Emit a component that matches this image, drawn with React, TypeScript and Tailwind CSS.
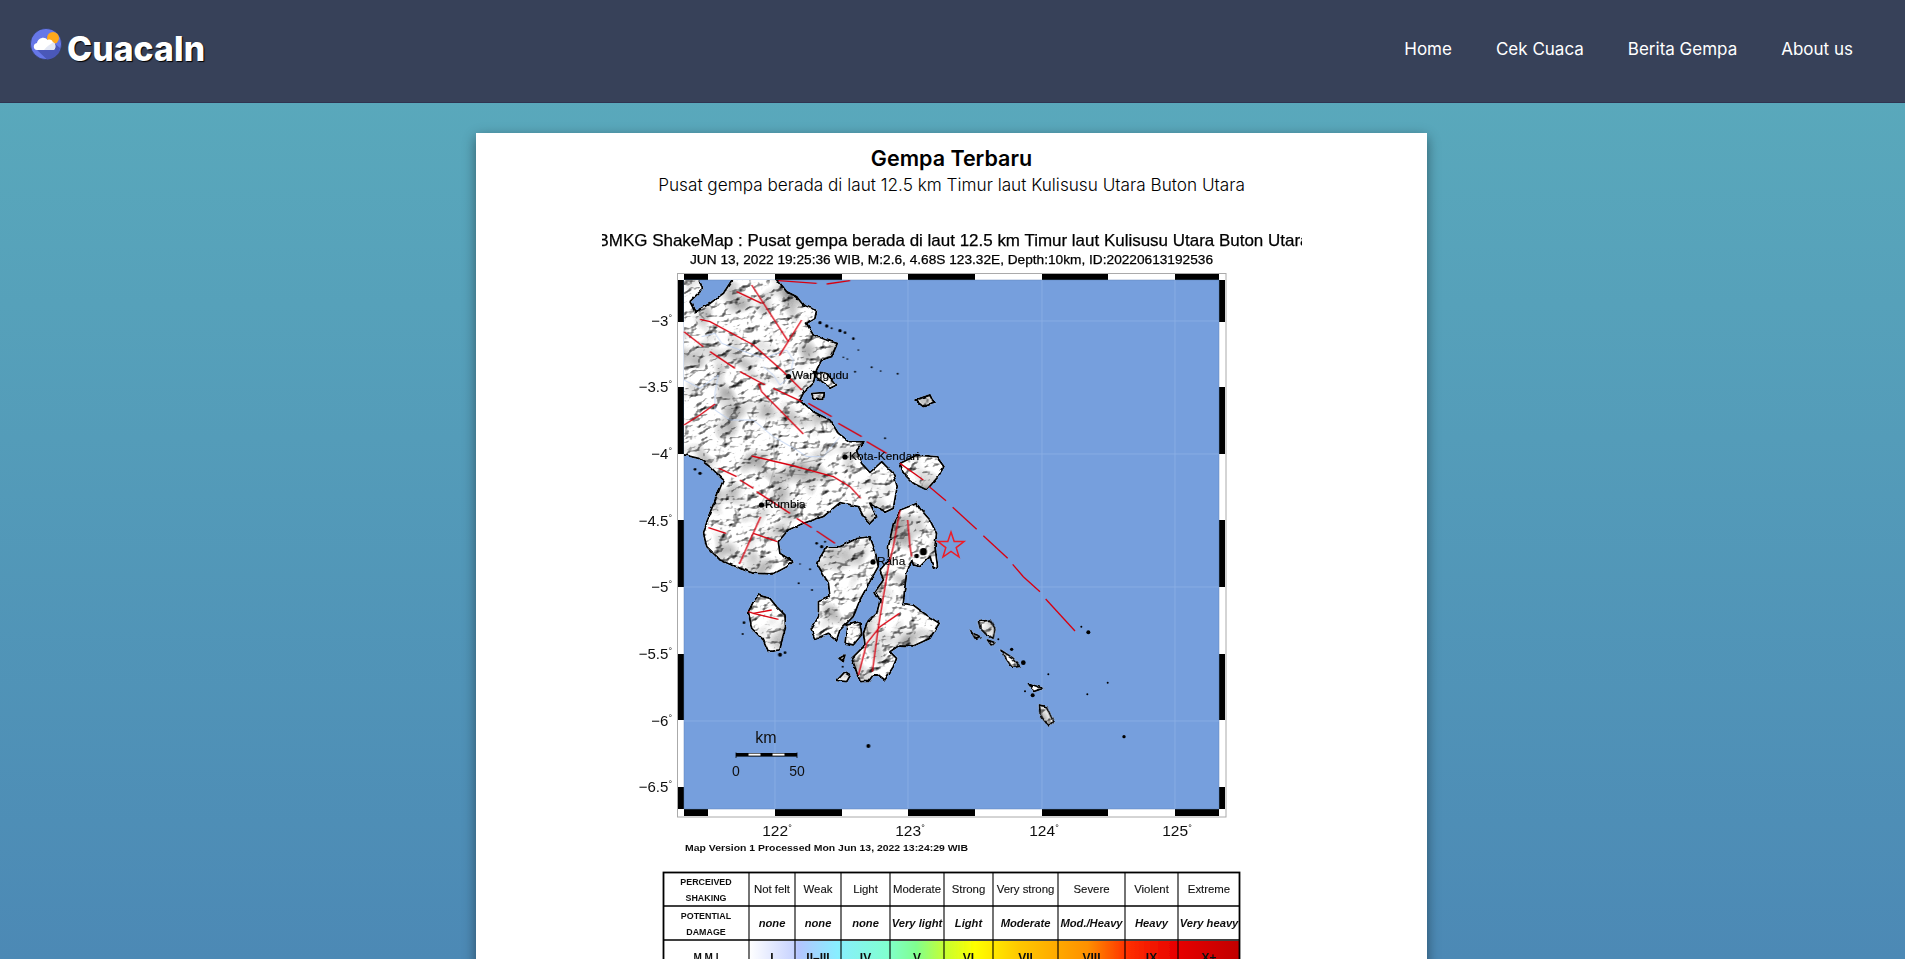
const LABEL = "'Liberation Sans', Arial, sans-serif";

const ticksX = [
  [684, 24, 1], [708, 67, 0], [775, 67, 1], [842, 66, 0], [908, 67, 1], [975, 67, 0], [1042, 66, 1], [1108, 67, 0], [1175, 44, 1],
];
const ticksY = [
  [280, 42, 1], [322, 65, 0], [387, 67, 1], [454, 66, 0], [520, 67, 1], [587, 67, 0], [654, 66, 1], [720, 67, 0], [787, 22, 1],
];
const lats = [["−3", 321], ["−3.5", 387], ["−4", 454], ["−4.5", 521], ["−5", 587], ["−5.5", 654], ["−6", 721], ["−6.5", 787]] as const;
const lons = [["122", 775], ["123", 908], ["124", 1042], ["125", 1175]] as const;

const landA = [
  "120,50 175,50 188,88 170,105 150,125 165,155 210,130 250,100 282,50 405,50 440,95 470,110 490,135 530,150 525,175 500,190 520,225 560,240 592,250 575,290 545,300 530,330 520,370 490,400 480,420 520,455 570,480 595,520 630,545 672,545 650,572 665,610 690,637 725,605 760,640 772,680 760,745 735,757 690,730 710,770 690,790 670,770 655,740 600,728 550,770 490,790 445,810 415,845 420,880 460,905 445,918 400,942 340,940 290,922 240,900 200,860 190,820 205,770 225,720 250,660 215,625 175,595 120,582",
  "780,610 830,585 890,590 912,620 895,650 860,690 820,670 790,640",
  "825,420 870,405 882,430 850,440",
  "515,400 550,398 548,418 520,418",
  "520,335 560,340 590,375 570,385 540,360",
];
const landB = [
  "535,0 560,-40 600,-40 650,-65 690,-70 705,-30 715,20 690,65 660,120 640,170 600,210 590,240 565,220 525,238 513,210 535,170 535,125 570,110 565,70 530,10",
  "780,-150 830,-170 840,-155 870,-120 890,-80 885,-40 893,20 880,25 870,-10 840,20 820,15 815,0 800,40 795,80 790,130 820,135 860,165 898,190 870,235 820,258 780,255 750,275 770,295 760,320 735,360 715,345 700,345 685,365 660,365 635,295 675,255 670,220 680,190 710,160 720,120 705,95 730,60 720,30 745,0 745,-40 760,-110",
  "355,105 390,115 410,140 435,165 437,200 425,245 420,270 385,275 370,240 335,205 325,155 340,125",
  "590,362 615,335 632,345 620,365",
  "597,295 615,285 610,305",
  "620,195 660,185 665,225 640,255 615,250",
];
const landC = [
  "295,605 330,600 345,625 340,655 320,645 300,625",
  "272,632 300,650 285,655",
  "322,660 345,668 335,678",
  "362,690 400,715 420,740 395,742 370,705",
  "445,790 490,805 460,815",
  "478,855 500,860 520,905 505,918 480,885",
];

const faults4 = [
  "M335,75 L445,245 M418,287 L485,180", "M290,95 L365,130",
  "M180,178 L210,185 L340,255 L430,335 L485,390",
  "M132,215 L190,260", "M210,275 L285,325", "M300,335 L375,375", "M400,385 L485,425",
  "M505,430 L575,470", "M595,490 L665,530", "M680,545 L740,580",
  "M355,370 L365,395 L490,522", "M132,495 L180,465 L225,432",
  "M335,588 L450,615 L580,650 L630,680 L662,715",
  "M237,625 L290,650", "M300,660 L340,685", "M350,695 L450,760", "M470,775 L515,803", "M530,813 L585,850",
  "M362,770 L298,912", "M340,820 L412,845", "M205,803 L258,820",
  "M780,750 L760,860 L745,920", "M803,780 L810,860 L815,890", "M415,62 L530,70", "M560,72 L630,62",
];
const faults5 = [
  "M745,20 L715,200 L697,335", "M325,155 L340,160 L395,150", "M340,160 L415,178", "M778,160 L720,200 L680,250 L655,345",
];
const faults7 = [
  "M60,130 L130,180", "M148,200 L198,242", "M218,262 L290,328", "M310,347 L383,415", "M398,433 L430,470 L480,515", "M497,537 L585,633",
];
const rivers = [
  "M185,230 L225,220 L245,250 L300,270 L370,295 L440,270 L460,300 L450,350 L420,375 L400,345 L370,320",
  "M132,360 L180,385 L235,345 L225,400 L225,450 L270,480 L340,480 L400,530 L470,570 L500,590 L550,590 L600,530",
];
const borders = [
  "M400,520 L405,620 L385,690 L350,760", "M480,610 L530,600 L590,560", "M405,640 L500,645",
];
const dots7 = [[604,620,3],[625,637,6],[355,658,3],[395,688,5],[505,763,3],[435,814,3],[683,788,3],[622,823,3],[732,950,5],[458,826,6],[430,728,7]];
const dots4 = [[655,270,2.5],[610,292,2.5],[622,297,2.5],[695,322,3],[722,333,2.5],[773,341,3],[735,535,3],[540,188,5],[560,198,5],[575,205,3],[600,212,5],[615,218,4],[640,236,4],[645,335,3],[165,628,4],[180,640,5],[530,850,4],[545,860,5],[555,845,3],[480,912,2.5],[510,928,3],[850,875,11],[830,888,7]];
const dots5 = [[476,70,3],[516,90,3],[312,188,4],[308,222,3],[420,284,6],[435,278,4],[608,320,3],[685,558,6]];

const cols = [663, 749, 795, 841, 890, 944, 993, 1058, 1125, 1178, 1240];
const shaking = ["Not felt", "Weak", "Light", "Moderate", "Strong", "Very strong", "Severe", "Violent", "Extreme"];
const damage = ["none", "none", "none", "Very light", "Light", "Moderate", "Mod./Heavy", "Heavy", "Very heavy"];
const mmi = ["I", "II–III", "IV", "V", "VI", "VII", "VIII", "IX", "X+"];

function Logo() {
  return (
    <svg viewBox="0 0 32 32" className="w-8 h-8 shrink-0">
      <circle cx="16" cy="16" r="15.6" fill="#6677e8" stroke="#2c3550" strokeWidth="0.6" />
      <path d="M5 20 L24 21 L30 22 A15.6 15.6 0 0 1 17 31.5 Z" fill="#4a58b8" />
      <path d="M25 21 L16 8 L30 20 L29 24 Z" fill="#4a58b8" />
      <circle cx="23" cy="10" r="6" fill="#ffa81c" />
      <path d="M7 22 C3 22 2.5 15.5 7 15 C7.5 10 15 7.5 17.5 12 C20 11 22.5 12 23 14.5 C26 14.5 26.5 22 23 22 Z" fill="#ffffff" />
      <path d="M14 22 L23 22 C26 22 26 14.5 23 14.5 C21 16 17 18 14 22 Z" fill="#e3e7f4" />
    </svg>
  );
}

function MapPicture() {
  return (
    <svg viewBox="602 225 700 734" className="block w-[700px] h-[734px] ml-[126px]" fontFamily={LABEL}>
      <defs>
        <filter id="land" filterUnits="userSpaceOnUse" x="684" y="280" width="535" height="529" colorInterpolationFilters="sRGB">
          <feTurbulence type="fractalNoise" baseFrequency="0.14" numOctaves="2" seed="4" result="wob" />
          <feDisplacementMap in="SourceGraphic" in2="wob" scale="3" xChannelSelector="R" yChannelSelector="G" result="disp" />
          <feTurbulence type="fractalNoise" baseFrequency="0.08 0.13" numOctaves="3" seed="8" result="n" />
          <feDiffuseLighting in="n" surfaceScale="5" diffuseConstant="1.3" lightingColor="#ffffff" result="dl">
            <feDistantLight azimuth="215" elevation="48" />
          </feDiffuseLighting>
          <feComponentTransfer in="dl" result="ct">
            <feFuncR type="table" tableValues="0.15 0.35 0.5 0.62 0.75 0.95 1 1" />
            <feFuncG type="table" tableValues="0.15 0.35 0.5 0.62 0.75 0.95 1 1" />
            <feFuncB type="table" tableValues="0.15 0.35 0.5 0.62 0.75 0.95 1 1" />
          </feComponentTransfer>
          <feTurbulence type="fractalNoise" baseFrequency="0.035" numOctaves="2" seed="21" result="big" />
          <feColorMatrix in="big" type="matrix" values="2.5 0 0 0 -0.35 2.5 0 0 0 -0.35 2.5 0 0 0 -0.35 0 0 0 0 1" result="bigGray" />
          <feComponentTransfer in="bigGray" result="patch">
            <feFuncR type="linear" slope="0.5" intercept="0.55" />
            <feFuncG type="linear" slope="0.5" intercept="0.55" />
            <feFuncB type="linear" slope="0.5" intercept="0.55" />
          </feComponentTransfer>
          <feBlend in="ct" in2="patch" mode="multiply" result="shade" />
          <feBlend in="disp" in2="shade" mode="multiply" result="b" />
          <feComposite in="b" in2="disp" operator="in" />
        </filter>
        <filter id="soft" filterUnits="userSpaceOnUse" x="602" y="225" width="700" height="734">
          <feGaussianBlur stdDeviation="0.4" />
        </filter>
        <clipPath id="pic"><rect x="602" y="225" width="700" height="734" /></clipPath>
        <linearGradient id="mmi" x1="749" x2="1240" y1="0" y2="0" gradientUnits="userSpaceOnUse">
          <stop offset="0" stopColor="#ffffff" />
          <stop offset="0.09" stopColor="#c9d4ff" />
          <stop offset="0.1" stopColor="#b4c4ff" />
          <stop offset="0.18" stopColor="#88eeff" />
          <stop offset="0.28" stopColor="#80ffd0" />
          <stop offset="0.34" stopColor="#80ff90" />
          <stop offset="0.4" stopColor="#c8ff30" />
          <stop offset="0.46" stopColor="#ffff00" />
          <stop offset="0.55" stopColor="#ffc800" />
          <stop offset="0.69" stopColor="#ff9000" />
          <stop offset="0.77" stopColor="#ff3000" />
          <stop offset="0.87" stopColor="#e80000" />
          <stop offset="1" stopColor="#c00000" />
        </linearGradient>
      </defs>
      <g clipPath="url(#pic)">
        <g filter="url(#soft)">
          <text x="597.5" y="245.5" fontSize="16.2" textLength="712" lengthAdjust="spacingAndGlyphs" fill="#000" stroke="#000" strokeWidth="0.25">BMKG ShakeMap : Pusat gempa berada di laut 12.5 km Timur laut Kulisusu Utara Buton Utara</text>
          <text x="690" y="264" fontSize="12.4" textLength="523" lengthAdjust="spacingAndGlyphs" fill="#000" stroke="#000" strokeWidth="0.25">JUN 13, 2022 19:25:36 WIB, M:2.6, 4.68S 123.32E, Depth:10km, ID:20220613192536</text>

          <rect x="677.5" y="273.5" width="548.5" height="543.5" fill="#fff" stroke="#aaa" />
          {ticksX.map(([x, w, k]) => (
            <g key={x}>
              <rect x={x} y={274} width={w} height={6} fill={k ? "#000" : "#fff"} />
              <rect x={x} y={809} width={w} height={7} fill={k ? "#000" : "#fff"} />
            </g>
          ))}
          {ticksY.map(([y, h, k]) => (
            <g key={y}>
              <rect x={678} y={y} width={6} height={h} fill={k ? "#000" : "#fff"} />
              <rect x={1219} y={y} width={6} height={h} fill={k ? "#000" : "#fff"} />
            </g>
          ))}
          <rect x="684" y="280" width="535" height="529" fill="#769fdd" stroke="#5f84bd" strokeWidth="0.5" />
          <g stroke="#8eb0e6" strokeWidth="0.8">
            {lons.map(([, x]) => <line key={x} x1={x} x2={x} y1={280} y2={809} />)}
            {[321, 454, 587, 721].map((y) => <line key={y} x1={684} x2={1219} y1={y} y2={y} />)}
          </g>

          <g filter="url(#land)" fill="#fff" stroke="#000" strokeWidth="5.6" strokeLinejoin="round">
            <g transform="translate(640 260) scale(0.33333)">{landA.map((p) => <polygon key={p} points={p} />)}</g>
            <g transform="translate(640 560) scale(0.33333)">{landB.map((p) => <polygon key={p} points={p} />)}</g>
            <g transform="translate(880 420) scale(0.33333)">{landC.map((p) => <polygon key={p} points={p} />)}</g>
          </g>

          <g transform="translate(640 260) scale(0.33333)" fill="#000">
            {dots4.map(([x, y, r]) => <circle key={`${x}-${y}`} cx={x} cy={y} r={r} />)}
            {rivers.map((d) => <path key={d} d={d} fill="none" stroke="#b7cdf0" strokeWidth="2.4" />)}
            {borders.map((d) => <path key={d} d={d} fill="none" stroke="#8d8d8d" strokeWidth="2" />)}
            {faults4.map((d) => <path key={d} d={d} fill="none" stroke="#d80010" strokeWidth="4" />)}
          </g>
          <g transform="translate(640 560) scale(0.33333)" fill="#000">
            {dots5.map(([x, y, r]) => <circle key={`${x}-${y}`} cx={x} cy={y} r={r} />)}
            {faults5.map((d) => <path key={d} d={d} fill="none" stroke="#d80010" strokeWidth="4" />)}
          </g>
          <g transform="translate(880 420) scale(0.33333)" fill="#000">
            {dots7.map(([x, y, r]) => <circle key={`${x}-${y}`} cx={x} cy={y} r={r} />)}
            {faults7.map((d) => <path key={d} d={d} fill="none" stroke="#d80010" strokeWidth="4" />)}
          </g>

          <polygon points="951,532 954.2,541.6 964,541.6 956.2,547.6 959,557 951,551.4 943,557 945.8,547.6 938,541.6 947.8,541.6" fill="none" stroke="#ee1c25" strokeWidth="1.5" />

          <g fontSize="11.8" fill="#000" stroke="#000" strokeWidth="0.15">
            <circle cx="788.5" cy="376.5" r="2.6" fill="#000" /><text x="792" y="379">Wanggudu</text>
            <circle cx="845" cy="457" r="2.6" fill="#000" /><text x="849" y="460" textLength="70">Kota-Kendari</text>
            <circle cx="761.5" cy="505" r="2.6" fill="#000" /><text x="765" y="507.5">Rumbia</text>
            <circle cx="873" cy="562" r="2.6" fill="#000" /><text x="877" y="564.5">Raha</text>
          </g>

          <g fontSize="15" fill="#111">
            {lats.map(([t, y]) => (
              <text key={t} x="672" y={y + 5} textAnchor="end">{t}<tspan dy="-5" fontSize="9">°</tspan></text>
            ))}
            {lons.map(([t, x]) => (
              <text key={t} x={x + 2} y="835.5" textAnchor="middle" fontSize="15.5">{t}<tspan dy="-5" fontSize="9">°</tspan></text>
            ))}
          </g>

          <text x="766" y="743" fontSize="16" textAnchor="middle" fill="#111">km</text>
          <rect x="736" y="753" width="61" height="3.6" fill="#000" />
          <rect x="748.5" y="753.6" width="12" height="2" fill="#fff" />
          <rect x="772.5" y="753.6" width="12" height="2" fill="#fff" />
          <path d="M736,752.5 V758 M797,752.5 V758" stroke="#000" strokeWidth="0.8" />
          <text x="736" y="776" fontSize="14" textAnchor="middle" fill="#111">0</text>
          <text x="797" y="776" fontSize="14" textAnchor="middle" fill="#111">50</text>

          <text x="685" y="851" fontSize="8.6" fontWeight="700" textLength="283" lengthAdjust="spacingAndGlyphs" fill="#111">Map Version 1 Processed Mon Jun 13, 2022 13:24:29 WIB</text>

          <rect x="749" y="941" width="491" height="18" fill="url(#mmi)" />
          <rect x="663.5" y="872.5" width="576" height="100" fill="none" stroke="#000" strokeWidth="1.8" />
          <path d="M663,906 H1240 M663,940 H1240" stroke="#000" strokeWidth="1.3" />
          {cols.slice(1, -1).map((x) => <line key={x} x1={x} x2={x} y1={872} y2={959} stroke="#000" strokeWidth="1.1" />)}

          <g fontSize="8.9" fontWeight="700" textAnchor="middle" fill="#111">
            <text x="706" y="885">PERCEIVED</text>
            <text x="706" y="901">SHAKING</text>
            <text x="706" y="919">POTENTIAL</text>
            <text x="706" y="935">DAMAGE</text>
            <text x="706" y="961" fontSize="10">M M I</text>
          </g>
          {shaking.map((t, i) => (
            <text key={i} x={(cols[i + 1] + cols[i + 2]) / 2} y="893" fontSize="11.4" textAnchor="middle" fill="#111" stroke="#111" strokeWidth="0.12">{t}</text>
          ))}
          {damage.map((t, i) => (
            <text key={i} x={(cols[i + 1] + cols[i + 2]) / 2} y="927" fontSize="11.2" fontWeight="700" fontStyle="italic" textAnchor="middle" fill="#111">{t}</text>
          ))}
          {mmi.map((t, i) => (
            <text key={i} x={(cols[i + 1] + cols[i + 2]) / 2} y="962" fontSize="12" fontWeight="700" textAnchor="middle" fill="#111">{t}</text>
          ))}
        </g>
      </g>
    </svg>
  );
}

export default function App() {
  return (
    <div className="h-[959px] overflow-hidden bg-gradient-to-b from-[#5bacbc] to-[#4c89b5] font-['Inter','Liberation_Sans',sans-serif]">
      <header className="h-[103px] bg-[#374159] border-b border-[#2f3450] flex items-center justify-between pl-[30px] pr-[52px]">
        <a className="flex items-center gap-[5px] -mt-[14px]">
          <Logo />
          <span className="mt-[9px] text-[33.7px] leading-none font-extrabold tracking-[0.1px] text-white [text-shadow:1px_1px_1px_#000]">CuacaIn</span>
        </a>
        <nav className="flex items-center gap-[44px] text-[17px] text-white -mt-[3px]">
          <a>Home</a>
          <a>Cek Cuaca</a>
          <a>Berita Gempa</a>
          <a>About us</a>
        </nav>
      </header>
      <div className="pl-[476px] pt-[30px]">
        <main className="w-[951px] h-[900px] bg-white shadow-[0_4px_12px_rgba(0,0,0,0.45)]">
          <h1 className="pt-[10px] text-center text-[21.5px] leading-[30px] font-semibold text-black">Gempa Terbaru</h1>
          <p className="text-center text-[17.2px] leading-[24px] font-light text-black">Pusat gempa berada di laut 12.5 km Timur laut Kulisusu Utara Buton Utara</p>
          <div className="pt-[28px]">
            <MapPicture />
          </div>
        </main>
      </div>
    </div>
  );
}
